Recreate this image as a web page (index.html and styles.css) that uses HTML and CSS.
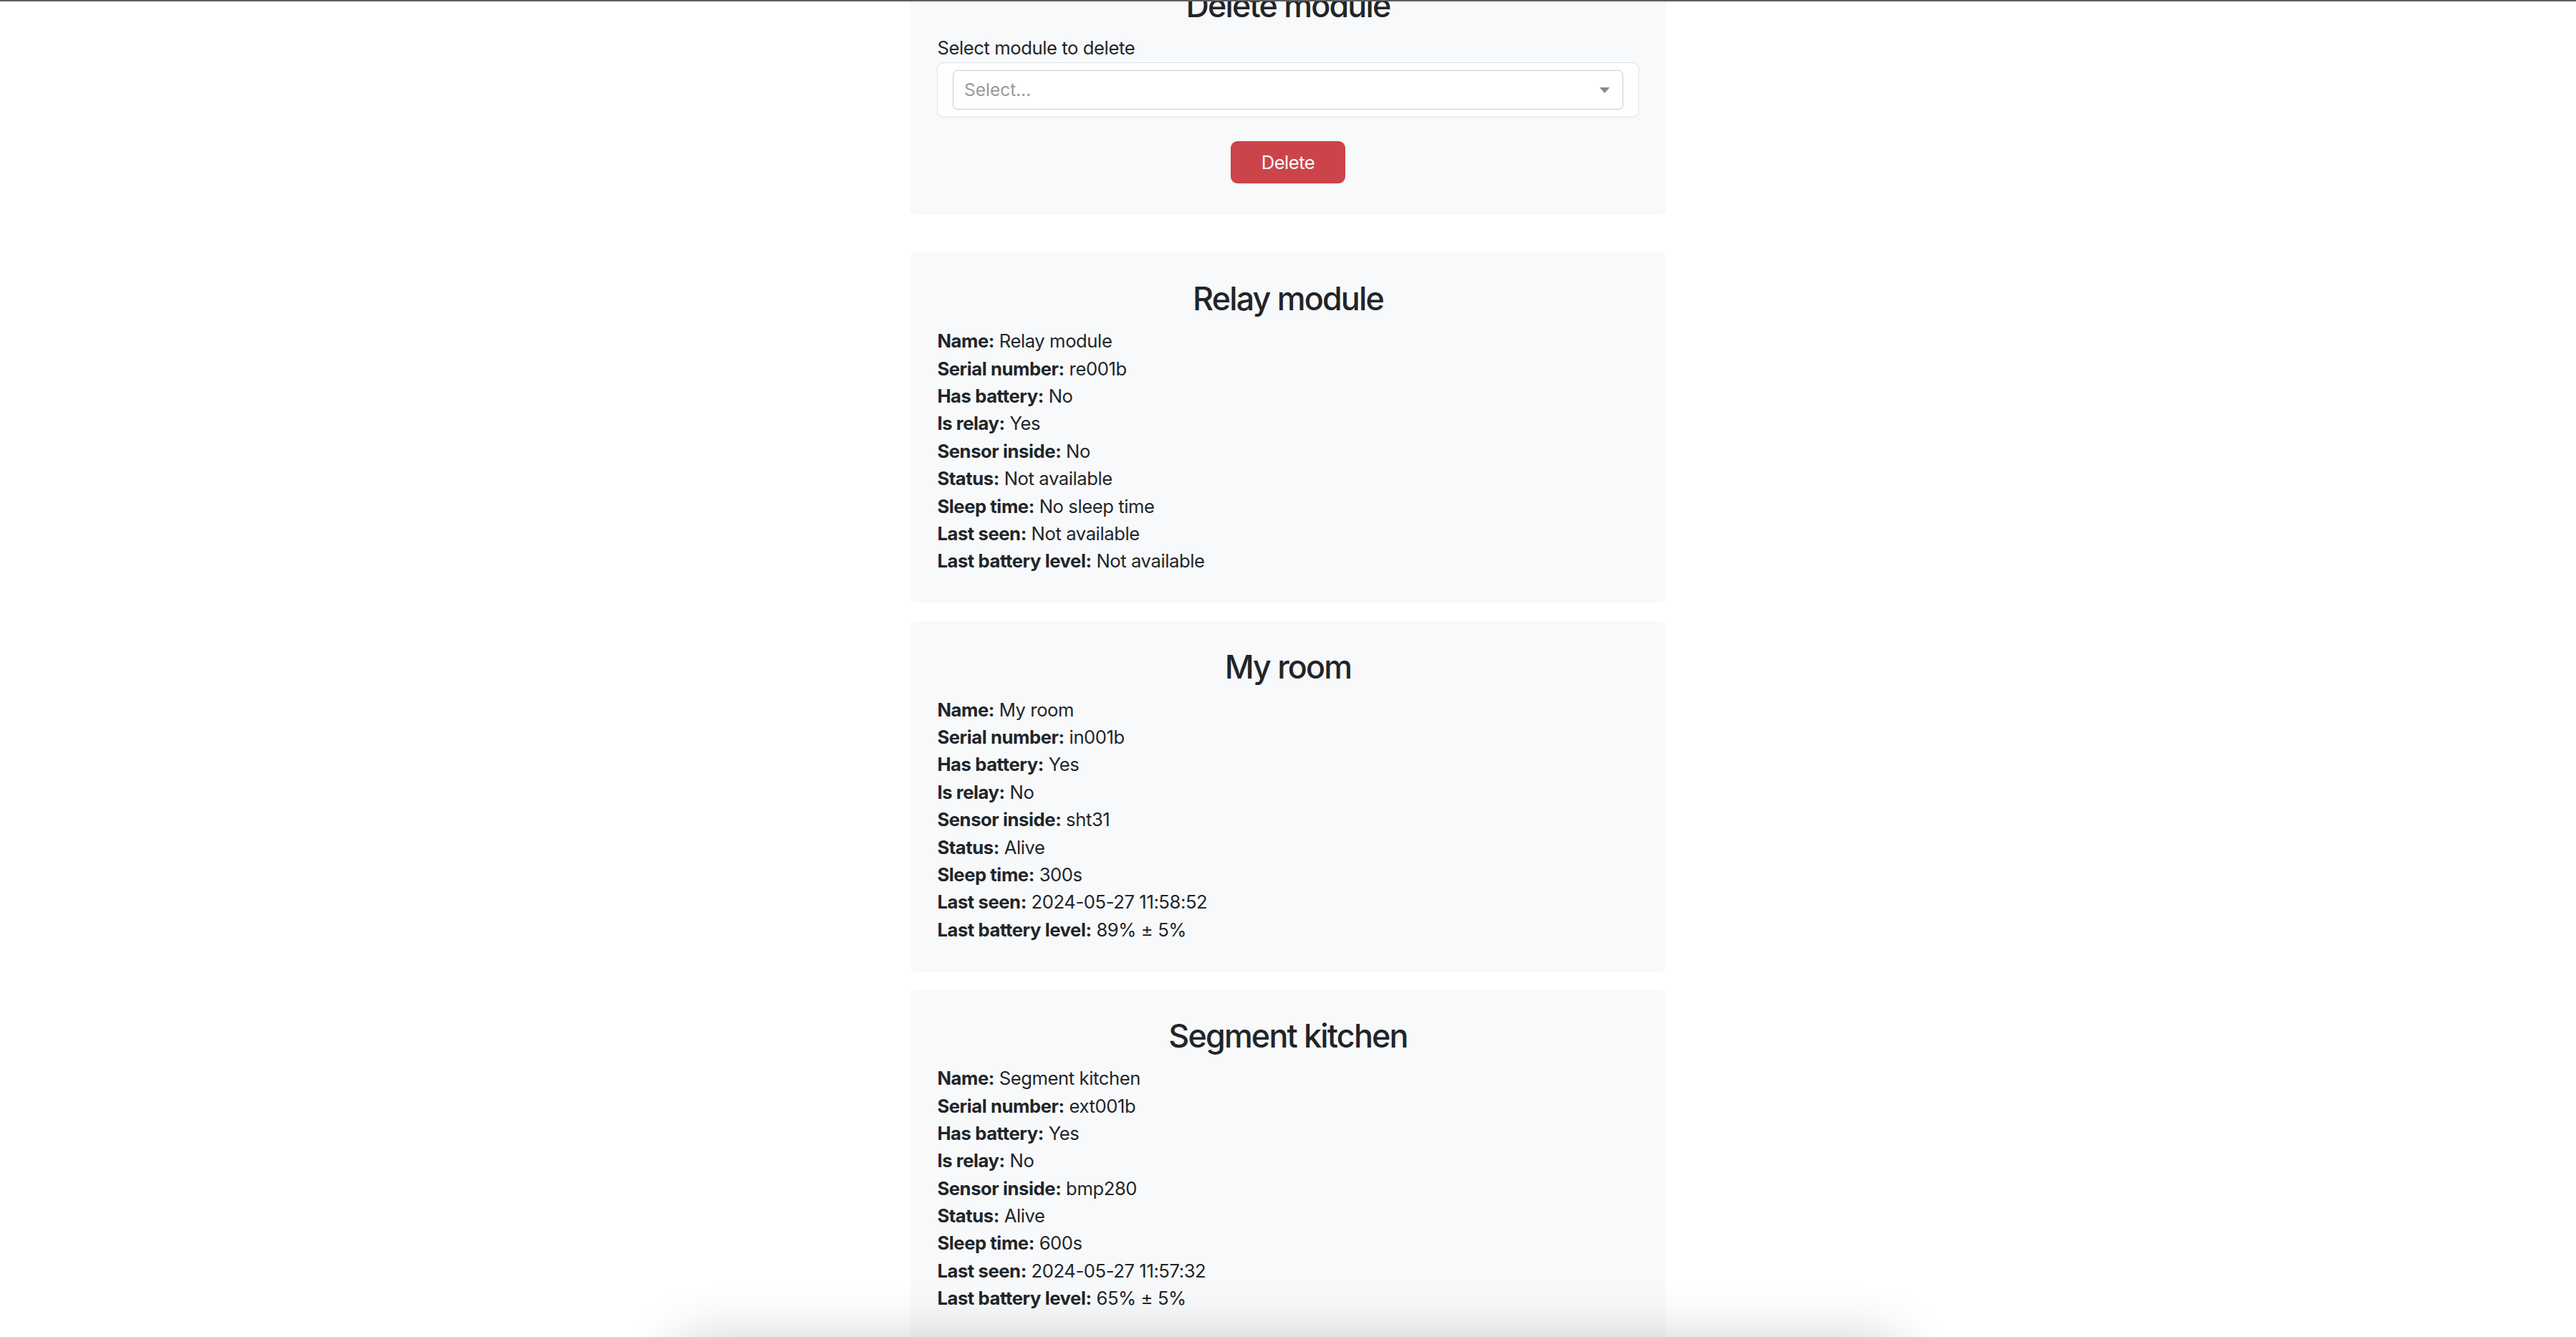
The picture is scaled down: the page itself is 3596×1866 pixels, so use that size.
FILE: index.html
```html
<!DOCTYPE html>
<html lang="en">
<head>
<meta charset="utf-8">
<title>Modules</title>
<link rel="stylesheet" href="styles.css">
</head>
<body>
<div class="topbar"></div>
<main class="page">
  <section class="card delete-card">
    <h3 class="card-title">Delete module</h3>
    <label class="field-label">Select module to delete</label>
    <div class="select-wrap">
      <div class="select-control">
        <span class="select-placeholder">Select...</span>
        <span class="select-caret"></span>
      </div>
    </div>
    <div class="actions"><button class="btn-danger">Delete</button></div>
  </section>

  <section class="card">
    <h3 class="card-title">Relay module</h3>
    <p class="row"><strong>Name:</strong> Relay module</p>
    <p class="row"><strong>Serial number:</strong> re001b</p>
    <p class="row"><strong>Has battery:</strong> No</p>
    <p class="row"><strong>Is relay:</strong> Yes</p>
    <p class="row"><strong>Sensor inside:</strong> No</p>
    <p class="row"><strong>Status:</strong> Not available</p>
    <p class="row"><strong>Sleep time:</strong> No sleep time</p>
    <p class="row"><strong>Last seen:</strong> Not available</p>
    <p class="row"><strong>Last battery level:</strong> Not available</p>
  </section>

  <section class="card">
    <h3 class="card-title">My room</h3>
    <p class="row"><strong>Name:</strong> My room</p>
    <p class="row"><strong>Serial number:</strong> in001b</p>
    <p class="row"><strong>Has battery:</strong> Yes</p>
    <p class="row"><strong>Is relay:</strong> No</p>
    <p class="row"><strong>Sensor inside:</strong> sht31</p>
    <p class="row"><strong>Status:</strong> Alive</p>
    <p class="row"><strong>Sleep time:</strong> 300s</p>
    <p class="row"><strong>Last seen:</strong> 2024-05-27 11:58:52</p>
    <p class="row"><strong>Last battery level:</strong> 89% ± 5%</p>
  </section>

  <section class="card">
    <h3 class="card-title">Segment kitchen</h3>
    <p class="row"><strong>Name:</strong> Segment kitchen</p>
    <p class="row"><strong>Serial number:</strong> ext001b</p>
    <p class="row"><strong>Has battery:</strong> Yes</p>
    <p class="row"><strong>Is relay:</strong> No</p>
    <p class="row"><strong>Sensor inside:</strong> bmp280</p>
    <p class="row"><strong>Status:</strong> Alive</p>
    <p class="row"><strong>Sleep time:</strong> 600s</p>
    <p class="row"><strong>Last seen:</strong> 2024-05-27 11:57:32</p>
    <p class="row"><strong>Last battery level:</strong> 65% ± 5%</p>
  </section>
</main>
<div class="bottom-shade"></div>
</body>
</html>
```

FILE: styles.css
```css
html {
  font-size: 25.6px;
}

body {
  margin: 0;
  background: #ffffff;
  color: #212529;
  font-family: "Inter", "Liberation Sans", sans-serif;
  font-size: 1rem;
  line-height: 1.5;
  letter-spacing: -0.4px;
}

.topbar {
  position: fixed;
  top: 0;
  left: 0;
  right: 0;
  height: 2px;
  background: #5f5f5f;
  z-index: 10;
}

.page {
  width: 1056px;
  margin: -56.5px auto 0;
}

.card {
  background: #f8f9fa;
  border-radius: 9.6px;
  padding: 38.4px;
  margin-bottom: 25.6px;
}

.delete-card {
  margin-bottom: 52px;
}

.card-title {
  margin: 0 0 12.8px;
  font-size: 44.8px;
  font-weight: 500;
  line-height: 1.2;
  letter-spacing: -1.8px;
  text-align: center;
}

.field-label {
  display: block;
  margin-top: 3px;
}

.select-wrap {
  background: #ffffff;
  border: 1px solid #dee2e6;
  border-radius: 9.6px;
  padding: 10px 20.6px 9.9px;
}

.select-control {
  box-sizing: border-box;
  height: 55.6px;
  border: 1px solid #cccccc;
  border-radius: 6.4px;
  display: flex;
  align-items: center;
  justify-content: space-between;
  padding: 0 18px 0 15px;
}

.select-placeholder {
  color: #9a9a9a;
  font-size: 24.5px;
  letter-spacing: 0;
}

.select-caret {
  width: 0;
  height: 0;
  border-left: 7px solid transparent;
  border-right: 7px solid transparent;
  border-top: 8px solid #888888;
}

.actions {
  display: flex;
  justify-content: center;
  margin-top: 33px;
  margin-bottom: 5.6px;
}

.btn-danger {
  box-sizing: border-box;
  width: 160px;
  height: 59px;
  padding: 0;
  border: 0;
  border-radius: 9.6px;
  background: #cb444a;
  color: #ffffff;
  font-family: inherit;
  font-size: 1rem;
  line-height: 1.5;
  letter-spacing: -0.5px;
}

.row {
  margin: 0;
}

.row strong {
  font-weight: 700;
}

.bottom-shade {
  position: fixed;
  left: 50%;
  bottom: -106px;
  width: 1700px;
  height: 100px;
  margin-left: -850px;
  box-shadow: 0 0 80px rgba(0, 0, 0, 0.2);
  pointer-events: none;
  z-index: 5;
}
```
